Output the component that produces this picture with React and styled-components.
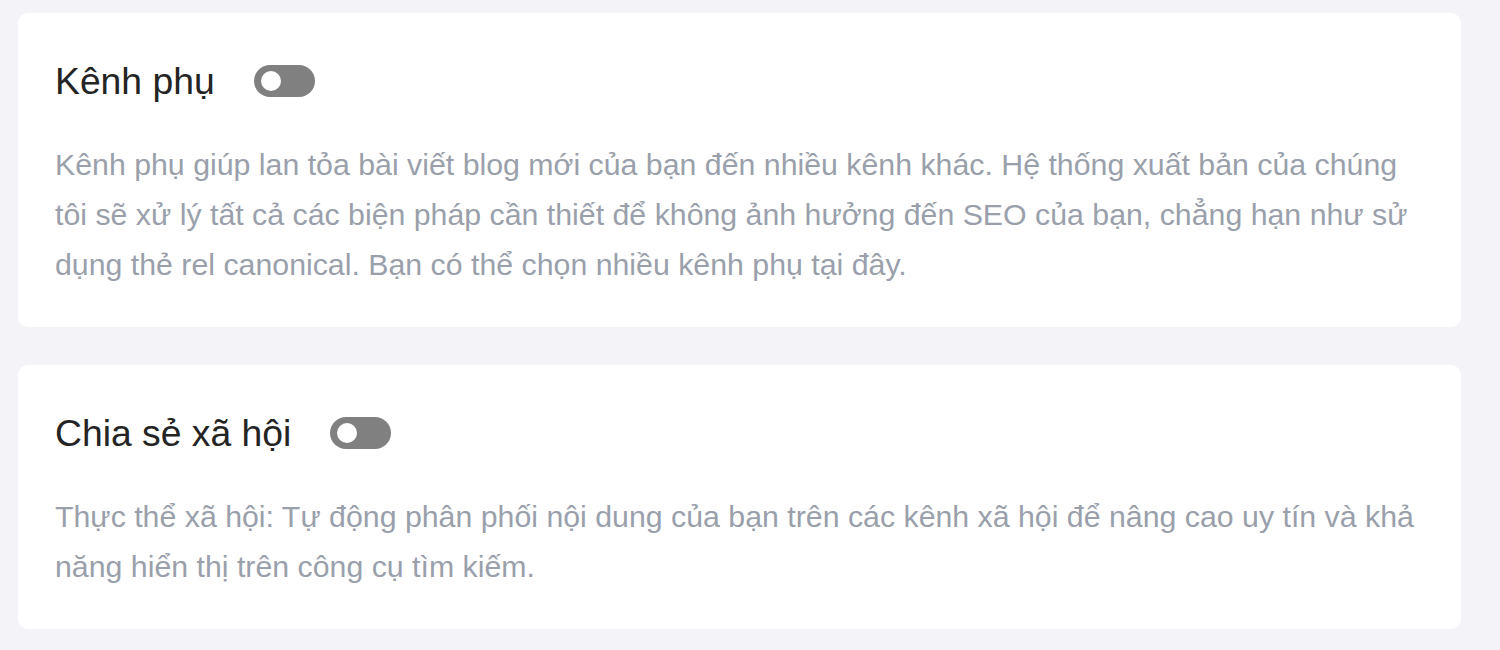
import React from "react";
import styled, { createGlobalStyle } from "styled-components";

const Global = createGlobalStyle`
  html, body { margin: 0; padding: 0; background: #f3f3f8; }
  body { font-family: "Liberation Sans", Arial, sans-serif; }
`;

const Page = styled.div`
  display: flex;
  flex-direction: column;
  gap: 38px;
  padding: 13px 39px 20px 18px;
`;

const Card = styled.section`
  background: #ffffff;
  border-radius: 10px;
  padding: 46px 37px ${(p) => p.$bottom}px 37px;
`;

const Header = styled.div`
  display: flex;
  align-items: center;
  gap: 39px;
  height: 44px;
`;

const Title = styled.h2`
  margin: 0;
  font-size: 37.3px;
  line-height: 44px;
  font-weight: 400;
  color: #242424;
`;

const Toggle = styled.button`
  position: relative;
  width: 61px;
  height: 32px;
  border: none;
  border-radius: 16px;
  background: #808080;
  padding: 0;
  cursor: pointer;
  &::after {
    content: "";
    position: absolute;
    left: 7px;
    top: 6px;
    width: 20px;
    height: 20px;
    border-radius: 50%;
    background: #ffffff;
  }
`;

const Desc = styled.p`
  margin: 37px 0 0;
  font-size: 30.3px;
  line-height: 50px;
  color: #9a9fac;
`;

export default function App() {
  return (
    <>
      <Global />
      <Page>
        <Card $bottom={37}>
          <Header>
            <Title>Kênh phụ</Title>
            <Toggle aria-label="Kênh phụ" />
          </Header>
          <Desc>
            Kênh phụ giúp lan tỏa bài viết blog mới của bạn đến nhiều kênh khác. Hệ thống xuất bản của chúng tôi sẽ xử lý tất cả các biện pháp cần thiết để không ảnh hưởng đến SEO của bạn, chẳng hạn như sử dụng thẻ rel canonical. Bạn có thể chọn nhiều kênh phụ tại đây.
          </Desc>
        </Card>
        <Card $bottom={37}>
          <Header>
            <Title>Chia sẻ xã hội</Title>
            <Toggle aria-label="Chia sẻ xã hội" />
          </Header>
          <Desc>
            Thực thể xã hội: Tự động phân phối nội dung của bạn trên các kênh xã hội để nâng cao uy tín và khả năng hiển thị trên công cụ tìm kiếm.
          </Desc>
        </Card>
      </Page>
    </>
  );
}
